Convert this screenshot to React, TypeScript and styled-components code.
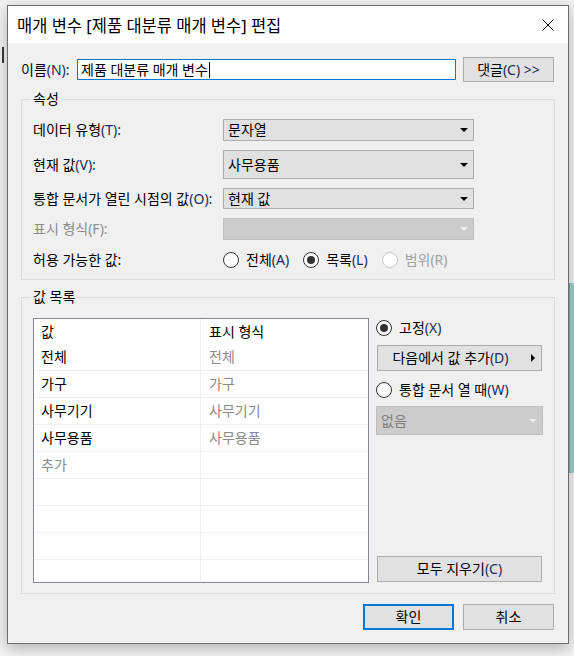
import React from 'react';
import styled, { createGlobalStyle, css } from 'styled-components';

const GlobalStyle = createGlobalStyle`
  html, body {
    margin: 0;
    padding: 0;
  }
  body {
    background: #f3f3f3;
    font-family: "Noto Sans", "Noto Sans CJK KR", sans-serif;
    font-size: 14px;
    color: #000;
  }
  * {
    box-sizing: border-box;
  }
`;

const Page = styled.div`
  width: 574px;
  height: 656px;
  display: flex;
  align-items: flex-start;
  overflow: hidden;
`;

const LeftStrip = styled.div`
  flex: none;
  width: 7px;
  padding: 47px 0 0 2px;
`;

const LeftMark = styled.div`
  width: 2px;
  height: 16px;
  background: #3a3a3a;
`;

const RightStrip = styled.div`
  flex: 1;
  padding-top: 283px;
`;

const MapBlock = styled.div`
  height: 190px;
  background: #8dbcbc;
  border-left: 1px solid #6f8f8f;
`;

const Dialog = styled.div`
  flex: none;
  margin-top: 5px;
  width: 562px;
  height: 639px;
  border: 1px solid #6d6d6d;
  background: #f0f0f0;
  box-shadow: 0 4px 14px rgba(0, 0, 0, 0.28);
  display: flex;
  flex-direction: column;
`;

const TitleBar = styled.div`
  height: 37px;
  flex: none;
  background: #fff;
  display: flex;
  align-items: center;
  justify-content: space-between;
  padding: 0 14px 0 9px;
  font-size: 16.5px;
`;

const Body = styled.div`
  flex: 1;
  display: flex;
  flex-direction: column;
  padding: 14px 13px 13px 13px;
`;

const NameRow = styled.div`
  display: flex;
  align-items: center;
  gap: 7px;
  height: 25px;
`;

const NameLabel = styled.span`
  flex: 0 0 49px;
  white-space: nowrap;
  line-height: 18px;
`;

const Label = styled.span<{ $disabled?: boolean }>`
  white-space: nowrap;
  line-height: 18px;
  color: ${(p) => (p.$disabled ? '#8d8d8d' : '#000')};
`;

// access key letters show the blue ClearType fringe in the original
const Mn = styled.span`
  color: #1a2b5c;
`;

const TextInput = styled.div`
  flex: 0 0 379px;
  height: 21px;
  background: #fff;
  border: 1px solid #0078d7;
  display: flex;
  align-items: center;
  padding-left: 3px;
  line-height: 18px;
  white-space: nowrap;
`;

const Caret = styled.span`
  width: 1px;
  height: 16px;
  background: #000;
  margin-left: 1px;
`;

const Button = styled.div<{ $primary?: boolean; $w?: number; $h?: number }>`
  flex: none;
  height: ${(p) => p.$h ?? 26}px;
  width: ${(p) => (p.$w ? `${p.$w}px` : 'auto')};
  background: #e1e1e1;
  border: 1px solid #adadad;
  display: flex;
  align-items: center;
  justify-content: center;
  line-height: 18px;
  white-space: nowrap;
  ${(p) =>
    p.$primary &&
    css`
      border: 2px solid #0078d7;
    `}
`;

const GroupBox = styled.div<{ $pb: number }>`
  margin-top: 17px;
  border: 1px solid #dcdcdc;
  padding: 0 11px ${(p) => p.$pb}px 11px;
`;

const GroupTitle = styled.div`
  margin: -10px 0 0 -2px;
  padding: 0 2px;
  width: fit-content;
  line-height: 18px;
  background: #f0f0f0;
`;

const PropList = styled.div`
  margin-top: 11px;
  display: flex;
  flex-direction: column;
  gap: 9px;
`;

const PropRow = styled.div<{ $h: number }>`
  display: grid;
  grid-template-columns: 190px 251px;
  align-items: center;
  height: ${(p) => p.$h}px;
`;

const Select = styled.div<{ $disabled?: boolean; $h?: number; $w?: number }>`
  height: ${(p) => p.$h ?? 22}px;
  width: ${(p) => (p.$w ? `${p.$w}px` : 'auto')};
  border: 1px solid ${(p) => (p.$disabled ? '#bfbfbf' : '#adadad')};
  background: ${(p) => (p.$disabled ? '#cccccc' : '#e1e1e1')};
  color: ${(p) => (p.$disabled ? '#7f7f7f' : '#000')};
  display: flex;
  align-items: center;
  justify-content: space-between;
  padding: 0 5px 0 4px;
  line-height: 18px;
`;

const DownArrow = styled.span<{ $disabled?: boolean }>`
  width: 0;
  height: 0;
  border-left: 4px solid transparent;
  border-right: 4px solid transparent;
  border-top: 4px solid ${(p) => (p.$disabled ? '#ececec' : '#000')};
`;

const RightArrow = styled.span`
  width: 0;
  height: 0;
  margin-left: 8px;
  border-top: 4px solid transparent;
  border-bottom: 4px solid transparent;
  border-left: 4px solid #000;
`;

const RadioGroup = styled.div`
  display: flex;
  align-items: center;
  gap: 14px;
`;

const RadioItem = styled.div<{ $disabled?: boolean }>`
  display: flex;
  align-items: center;
  gap: 7px;
  line-height: 18px;
  color: ${(p) => (p.$disabled ? '#a0a0a0' : '#000')};
`;

const RadioCircle = styled.span<{ $checked?: boolean; $disabled?: boolean }>`
  flex: none;
  width: 16px;
  height: 16px;
  border-radius: 50%;
  border: 1px solid ${(p) => (p.$disabled ? '#c6c6c6' : '#333')};
  background: #fff;
  display: flex;
  align-items: center;
  justify-content: center;
  &::after {
    content: '';
    width: 8px;
    height: 8px;
    border-radius: 50%;
    background: #333;
    display: ${(p) => (p.$checked ? 'block' : 'none')};
  }
`;

const ValuesArea = styled.div`
  margin-top: 12px;
  display: flex;
  gap: 7px;
`;

const ValueList = styled.div`
  width: 336px;
  height: 265px;
  border: 1px solid #828790;
  background: #fff;
  overflow: hidden;
`;

const ListRow = styled.div<{ $header?: boolean }>`
  display: grid;
  grid-template-columns: 167px 1fr;
  height: ${(p) => (p.$header ? 25 : 27)}px;
  border-bottom: ${(p) => (p.$header ? 'none' : '1px solid #f0f0f0')};
`;

const Cell = styled.div<{ $muted?: boolean; $first?: boolean }>`
  display: flex;
  align-items: center;
  line-height: 18px;
  padding-left: ${(p) => (p.$first ? 7 : 8)}px;
  color: ${(p) => (p.$muted ? '#8a8a8a' : '#000')};
  border-right: ${(p) => (p.$first ? '1px solid #f0f0f0' : 'none')};
`;

const SideColumn = styled.div`
  width: 166px;
  height: 265px;
  display: flex;
  flex-direction: column;
`;

const SideRadio = styled(RadioItem)<{ $mt: number }>`
  height: 18px;
  margin-top: ${(p) => p.$mt}px;
`;

const MenuButton = styled(Button)`
  margin: 8px 0 0 1px;
  width: 165px;
  padding-right: 6px;
  justify-content: space-between;
`;

const MenuText = styled.span`
  flex: 1;
  text-align: center;
`;

const SideSelect = styled(Select)`
  margin-top: 7px;
`;

const Spacer = styled.div`
  flex: 1;
`;

const ClearButton = styled(Button)`
  margin: 0 0 1px 1px;
  width: 165px;
`;

const Footer = styled.div`
  margin-top: 10px;
  display: flex;
  justify-content: flex-end;
  gap: 9px;
  padding-right: 1px;
`;

const CloseIcon = () => (
  <svg width="12" height="12" viewBox="0 0 12 12">
    <path d="M0.5 0.5 L11.5 11.5 M11.5 0.5 L0.5 11.5" stroke="#000" strokeWidth="1" fill="none" />
  </svg>
);

const Radio = ({ label, mn, checked, disabled }: { label: string; mn: string; checked?: boolean; disabled?: boolean }) => (
  <RadioItem $disabled={disabled}>
    <RadioCircle $checked={checked} $disabled={disabled} />
    <span>
      {label}
      {disabled ? `(${mn})` : <Mn>({mn})</Mn>}
    </span>
  </RadioItem>
);

const rows: { value: string; display: string; muted?: boolean }[] = [
  { value: '전체', display: '전체' },
  { value: '가구', display: '가구' },
  { value: '사무기기', display: '사무기기' },
  { value: '사무용품', display: '사무용품' },
  { value: '추가', display: '', muted: true },
  { value: '', display: '' },
  { value: '', display: '' },
  { value: '', display: '' },
  { value: '', display: '' },
];

export default function App() {
  return (
    <>
      <GlobalStyle />
      <Page>
        <LeftStrip>
          <LeftMark />
        </LeftStrip>
        <Dialog>
          <TitleBar>
            <span>매개 변수 [제품 대분류 매개 변수] 편집</span>
            <CloseIcon />
          </TitleBar>
          <Body>
            <NameRow>
              <NameLabel>
                이름<Mn>(N):</Mn>
              </NameLabel>
              <TextInput>
                제품 대분류 매개 변수
                <Caret />
              </TextInput>
              <Button $w={91} $h={25}>
                댓글<Mn>(C) &gt;&gt;</Mn>
              </Button>
            </NameRow>

            <GroupBox $pb={8}>
              <GroupTitle>속성</GroupTitle>
              <PropList>
                <PropRow $h={22}>
                  <Label>
                    데이터 유형<Mn>(T):</Mn>
                  </Label>
                  <Select>
                    문자열
                    <DownArrow />
                  </Select>
                </PropRow>
                <PropRow $h={29}>
                  <Label>
                    현재 값<Mn>(V):</Mn>
                  </Label>
                  <Select $h={29}>
                    사무용품
                    <DownArrow />
                  </Select>
                </PropRow>
                <PropRow $h={21}>
                  <Label>
                    통합 문서가 열린 시점의 값<Mn>(O):</Mn>
                  </Label>
                  <Select $h={21}>
                    현재 값
                    <DownArrow />
                  </Select>
                </PropRow>
                <PropRow $h={22}>
                  <Label $disabled>표시 형식(F):</Label>
                  <Select $disabled>
                    <span />
                    <DownArrow $disabled />
                  </Select>
                </PropRow>
                <PropRow $h={22}>
                  <Label>허용 가능한 값:</Label>
                  <RadioGroup>
                    <Radio label="전체" mn="A" />
                    <Radio label="목록" mn="L" checked />
                    <Radio label="범위" mn="R" disabled />
                  </RadioGroup>
                </PropRow>
              </PropList>
            </GroupBox>

            <GroupBox $pb={10}>
              <GroupTitle>값 목록</GroupTitle>
              <ValuesArea>
                <ValueList>
                  <ListRow $header>
                    <Cell $first>값</Cell>
                    <Cell>표시 형식</Cell>
                  </ListRow>
                  {rows.map((r, i) => (
                    <ListRow key={i}>
                      <Cell $first $muted={r.muted}>
                        {r.value}
                      </Cell>
                      <Cell $muted>{r.display}</Cell>
                    </ListRow>
                  ))}
                </ValueList>
                <SideColumn>
                  <SideRadio $mt={1}>
                    <RadioCircle $checked />
                    <span>
                      고정<Mn>(X)</Mn>
                    </span>
                  </SideRadio>
                  <MenuButton>
                    <MenuText>
                      다음에서 값 추가<Mn>(D)</Mn>
                    </MenuText>
                    <RightArrow />
                  </MenuButton>
                  <SideRadio $mt={10}>
                    <RadioCircle />
                    <span>
                      통합 문서 열 때<Mn>(W)</Mn>
                    </span>
                  </SideRadio>
                  <SideSelect $disabled $h={29} $w={167}>
                    없음
                    <DownArrow $disabled />
                  </SideSelect>
                  <Spacer />
                  <ClearButton>
                    모두 지우기<Mn>(C)</Mn>
                  </ClearButton>
                </SideColumn>
              </ValuesArea>
            </GroupBox>

            <Footer>
              <Button $primary $w={91}>
                확인
              </Button>
              <Button $w={91}>취소</Button>
            </Footer>
          </Body>
        </Dialog>
        <RightStrip>
          <MapBlock />
        </RightStrip>
      </Page>
    </>
  );
}
